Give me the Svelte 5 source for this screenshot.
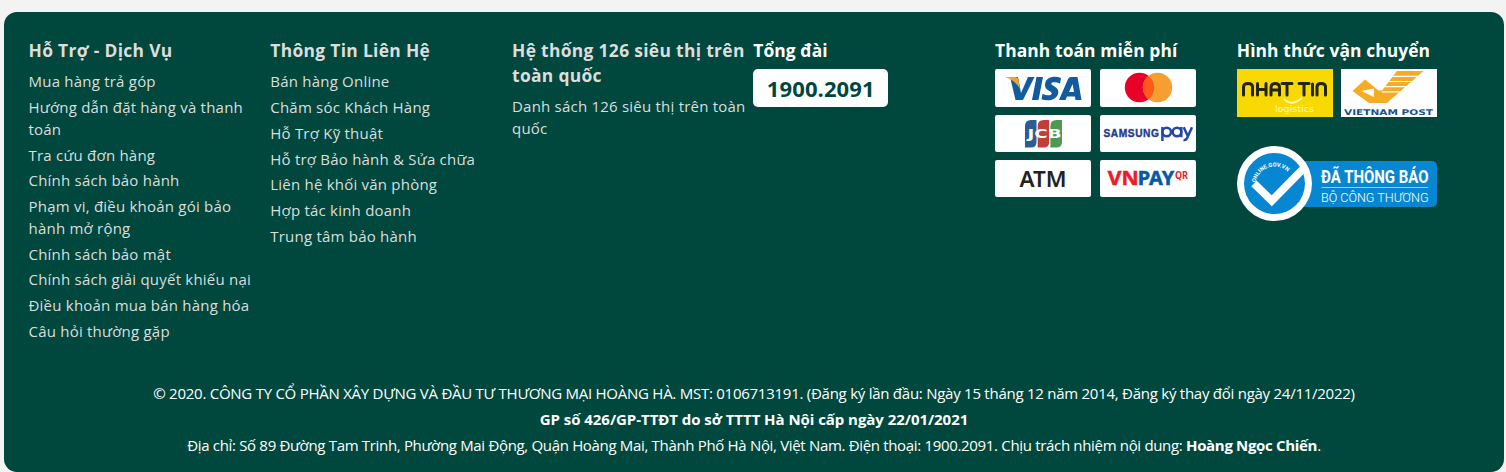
<script>
  const support = [
    'Mua hàng trả góp',
    'Hướng dẫn đặt hàng và thanh toán',
    'Tra cứu đơn hàng',
    'Chính sách bảo hành',
    'Phạm vi, điều khoản gói bảo hành mở rộng',
    'Chính sách bảo mật',
    'Chính sách giải quyết khiếu nại',
    'Điều khoản mua bán hàng hóa',
    'Câu hỏi thường gặp'
  ];
  const contact = [
    'Bán hàng Online',
    'Chăm sóc Khách Hàng',
    'Hỗ Trợ Kỹ thuật',
    'Hỗ trợ Bảo hành & Sửa chữa',
    'Liên hệ khối văn phòng',
    'Hợp tác kinh doanh',
    'Trung tâm bảo hành'
  ];
  const stores = ['Danh sách 126 siêu thị trên toàn quốc'];
  const groups = [
    { title: 'Hỗ Trợ - Dịch Vụ', links: support },
    { title: 'Thông Tin Liên Hệ', links: contact },
    { title: 'Hệ thống 126 siêu thị trên toàn quốc', links: stores }
  ];
</script>

<footer>
  <div class="columns">
    {#each groups as group}
      <section class="group">
        <h4>{group.title}</h4>
        <ul>
          {#each group.links as link}
            <li>{link}</li>
          {/each}
        </ul>
      </section>
    {/each}

    <section class="bright">
      <h4>Tổng đài</h4>
      <span class="hotline">1900.2091</span>
    </section>

    <section class="bright">
      <h4>Thanh toán miễn phí</h4>
      <div class="payments">
        <div class="pay first">
          <svg viewBox="0 0 96 38">
            <g fill="#125b9f">
              <path d="M15 8 H23 L26 24 L33 8 H39.500 L28 31 H20.500 L16 12 Z" />
              <path d="M41.500 8 H48 L43.500 31 H37 Z" />
              <path d="M66 9 L65 14.500 C61 12.800 56.500 12.800 56.300 14.700 C56 16.800 64 17.500 63.300 23.500 C62.500 31 53 32.800 46.500 30.300 L47.600 24.700 C51.500 26.800 56.500 26.900 56.700 24.400 C56.900 21.800 49.300 21.500 50 15.200 C50.800 8 59.500 6.300 66 9 Z" />
              <path fill-rule="evenodd" d="M76 8 H82.500 L86.500 31 H80.500 L79.900 27.500 H72 L70.500 31 H64 L73 10 Q74 8 76 8 Z M77.600 15 L74 23 H79 Z" />
            </g>
            <path d="M10 8 H20 Q23 8 23.500 11 L25 20 Q20 11 10 8 Z" fill="#f3a32c" />
          </svg>
        </div>
        <div class="pay first">
          <svg viewBox="0 0 96 38">
            <circle cx="39.500" cy="18.500" r="14.700" fill="#e90029" />
            <circle cx="57.500" cy="18.500" r="14.700" fill="#f49f30" />
            <path d="M48.500 6.900 A14.700 14.700 0 0 1 48.500 30.100 A14.700 14.700 0 0 1 48.500 6.900 Z" fill="#fb5a1c" />
          </svg>
        </div>
        <div class="pay">
          <svg viewBox="0 0 96 37">
            <path d="M30 11 Q30 5 36 5 H41.500 V27 Q41.500 32.500 36 32.500 H30 Z" fill="#2b5d99" />
            <path d="M42.700 11 Q42.700 5 48.700 5 H54.200 V27 Q54.200 32.500 48.700 32.500 H42.700 Z" fill="#c33d38" />
            <path d="M55.400 11 Q55.400 5 61.400 5 H67 V27 Q67 32.500 61.400 32.500 H55.400 Z" fill="#4b9a50" />
            <text class="wide" x="32.500" y="22.800" font-size="11.500" textLength="34" lengthAdjust="spacingAndGlyphs" fill="#fff">JCB</text>
          </svg>
        </div>
        <div class="pay">
          <svg viewBox="0 0 96 37">
            <text class="wide samsung" x="3.500" y="22" font-size="10.500" textLength="56" lengthAdjust="spacingAndGlyphs">SAMSUNG</text>
            <g fill="none" stroke="#2548a0" stroke-width="2.500">
              <circle cx="66.700" cy="17" r="4.300" />
              <path d="M62.400 12 V26" />
              <circle cx="77" cy="17" r="4.300" />
              <path d="M81.300 12 V22.300 M83.700 12.200 L88 21.500 M92 12.200 L87 23.300 Q86 25.500 83.500 25" />
            </g>
          </svg>
        </div>
        <div class="pay">
          <svg viewBox="0 0 96 37">
            <text class="atm" x="24.500" y="27" font-size="22" textLength="47" lengthAdjust="spacingAndGlyphs" fill="#222">ATM</text>
          </svg>
        </div>
        <div class="pay">
          <svg viewBox="0 0 96 37">
            <text class="vnpay" x="7.700" y="25" font-size="19" textLength="31" lengthAdjust="spacingAndGlyphs" fill="#ec1c2a" stroke="#ec1c2a">VN</text>
            <text class="vnpay" x="37.700" y="25" font-size="19" textLength="36.500" lengthAdjust="spacingAndGlyphs" fill="#065aa5" stroke="#065aa5">PAY</text>
            <text class="vnpay" x="75" y="18.500" font-size="10" textLength="13" lengthAdjust="spacingAndGlyphs" fill="#ec1c2a">QR</text>
          </svg>
        </div>
      </div>
    </section>

    <section class="bright">
      <h4>Hình thức vận chuyển</h4>
      <div class="shipping">
        <svg class="carrier" viewBox="0 0 96 48">
          <rect width="96" height="48" fill="#f9d903" />
          <g fill="none" stroke="#24250f" stroke-width="3" stroke-linecap="round" stroke-linejoin="round">
            <path d="M6.500 26 V18 Q6.500 14.500 11 14.500 Q15.500 14.500 15.500 18 V26" />
            <path d="M20.500 14.500 V26 M29 14.500 V26 M20.500 20.500 H29" />
            <path d="M34 26 V18.500 Q34 14.500 38.200 14.500 Q42.500 14.500 42.500 18.500 V26 M34 21 H42.500" />
            <path d="M45 14.500 H55 M50 14.500 V26 M62 14.500 H72 M67 14.500 V26 M75.500 15 V26" />
            <path d="M80 26 V18 Q80 14.500 84 14.500 Q88.500 14.500 88.500 18 V26" />
          </g>
          <path d="M47 30 Q54 38 65 29" fill="none" stroke="#fff9bf" stroke-width="1.800" />
          <text class="logistics" x="38" y="43" font-size="8.500" textLength="39" lengthAdjust="spacingAndGlyphs">logistics</text>
        </svg>
        <svg class="carrier" viewBox="0 0 96 48">
          <rect width="96" height="48" fill="#fff" />
          <path fill="#f6ab25" fill-rule="evenodd" d="M11.500 22 L24 10.500 L37.500 21.500 H41 L56 2 H82.500 L46 34 H28 Z M20.500 22 L33 19.500 V28 Z" />
          <path d="M48 7.300 H80 M44 12.500 H74 M42 17.700 H68 M41 22.900 H62" stroke="#fff" stroke-width="1.200" />
          <text class="wide" x="3" y="46.400" font-size="7.800" textLength="89" lengthAdjust="spacingAndGlyphs" fill="#17528f">VIETNAM POST</text>
        </svg>
      </div>
      <svg class="notice" viewBox="0 0 200 76">
        <defs><path id="seal-arc" d="M18.700 36.500 A19 19 0 0 1 51.500 26.700" /></defs>
        <rect x="40" y="15" width="160" height="46" rx="5" fill="#0787d1" />
        <circle cx="37.500" cy="37.500" r="37.500" fill="#fff" />
        <circle cx="37.500" cy="37.500" r="30.500" fill="#0787d1" />
        <path d="M17 37.500 L34.800 54.800 L66.500 22.500" fill="none" stroke="#fff" stroke-width="7.800" />
        <text class="seal" font-size="5.600"><textPath href="#seal-arc" textLength="41">ONLINE.GOV.VN</textPath></text>
        <text class="condensed" x="84" y="36.500" font-size="18" textLength="107.500" lengthAdjust="spacingAndGlyphs">ĐÃ THÔNG BÁO</text>
        <path d="M84.500 41.500 H191" stroke="#9fd2ee" stroke-width="1" />
        <text class="light" x="84" y="56" font-size="12" textLength="107.500" lengthAdjust="spacingAndGlyphs">BỘ CÔNG THƯƠNG</text>
      </svg>
    </section>
  </div>

  <div class="legal">
    <p class="company">© 2020. CÔNG TY CỔ PHẦN XÂY DỰNG VÀ ĐẦU TƯ THƯƠNG MẠI HOÀNG HÀ. MST: 0106713191. (Đăng ký lần đầu: Ngày 15 tháng 12 năm 2014, Đăng ký thay đổi ngày 24/11/2022)</p>
    <p class="license">GP số 426/GP-TTĐT do sở TTTT Hà Nội cấp ngày 22/01/2021</p>
    <p class="address">Địa chỉ: Số 89 Đường Tam Trinh, Phường Mai Động, Quận Hoàng Mai, Thành Phố Hà Nội, Việt Nam. Điện thoại: 1900.2091. Chịu trách nhiệm nội dung: <b>Hoàng Ngọc Chiến</b>.</p>
  </div>
</footer>

<style>
  :global(body) {
    background: #f3f3f3;
  }
  footer {
    box-sizing: border-box;
    width: 1500px;
    height: 460px;
    margin: 12px 0 0 4px;
    padding: 26px 24px 0;
    border-radius: 13px;
    background: #00483d;
    color: #fff;
    font-family: 'Open Sans', 'Noto Sans', sans-serif;
    display: flex;
    flex-direction: column;
  }
  .columns {
    display: grid;
    grid-template-columns: repeat(6, 241.75px);
    height: 342px;
  }
  .group {
    color: #ddd;
    padding-left: 0.5px;
  }
  .bright {
    color: #fff;
  }
  h4 {
    margin: 0 0 6px;
    font-size: 17.4px;
    line-height: 25px;
    font-weight: 700;
    letter-spacing: 0.1px;
  }
  .group h4 {
    margin-bottom: 8.4px;
    letter-spacing: 0.33px;
    margin-right: -4px;
  }
  .bright h4 {
    white-space: nowrap;
  }
  ul {
    margin: 0;
    padding: 0;
    list-style: none;
  }
  li {
    margin-bottom: 4px;
    font-size: 15px;
    line-height: 21.75px;
    letter-spacing: 0.22px;
  }
  .hotline {
    display: flex;
    align-items: center;
    justify-content: center;
    width: 135px;
    height: 38px;
    border-radius: 5px;
    background: #fff;
    color: #00483d;
    font-size: 22px;
    font-weight: 700;
    letter-spacing: 0.1px;
  }
  .payments {
    display: grid;
    grid-template-columns: 96px 96px;
    gap: 8px 9px;
  }
  .pay {
    height: 37px;
    border-radius: 2px;
    background: #fff;
  }
  .first {
    height: 38px;
  }
  svg {
    display: block;
    overflow: visible;
  }
  .shipping {
    display: flex;
    gap: 8px;
  }
  .carrier {
    width: 96px;
    height: 48px;
  }
  .notice {
    width: 200px;
    height: 76px;
    margin-top: 29px;
  }
  .wide {
    font-family: 'DejaVu Sans', sans-serif;
    font-weight: 700;
  }
  .samsung {
    fill: #253d8d;
    stroke: #253d8d;
    stroke-width: 0.4px;
    font-family: 'Liberation Sans', sans-serif;
    letter-spacing: 0.6px;
  }
  .atm {
    font-family: 'Noto Sans', sans-serif;
    font-weight: 600;
  }
  .vnpay {
    font-family: 'Noto Sans', sans-serif;
    font-weight: 700;
    stroke-width: 0.5px;
  }
  .logistics {
    fill: #fff7ae;
    font-family: 'DejaVu Sans', sans-serif;
  }
  .condensed {
    fill: #fff;
    font-family: Roboto, sans-serif;
    font-weight: 700;
  }
  .light {
    fill: #fff;
    font-family: Roboto, sans-serif;
    font-weight: 300;
  }
  .seal {
    fill: #fff;
    font-family: Roboto, sans-serif;
    font-weight: 700;
  }
  p {
    margin: 0;
    font-size: 15px;
    line-height: 26px;
    text-align: center;
    white-space: nowrap;
  }
  .company {
    letter-spacing: -0.255px;
  }
  .license {
    font-weight: 700;
    letter-spacing: -0.05px;
  }
  .address {
    letter-spacing: -0.325px;
  }
</style>
